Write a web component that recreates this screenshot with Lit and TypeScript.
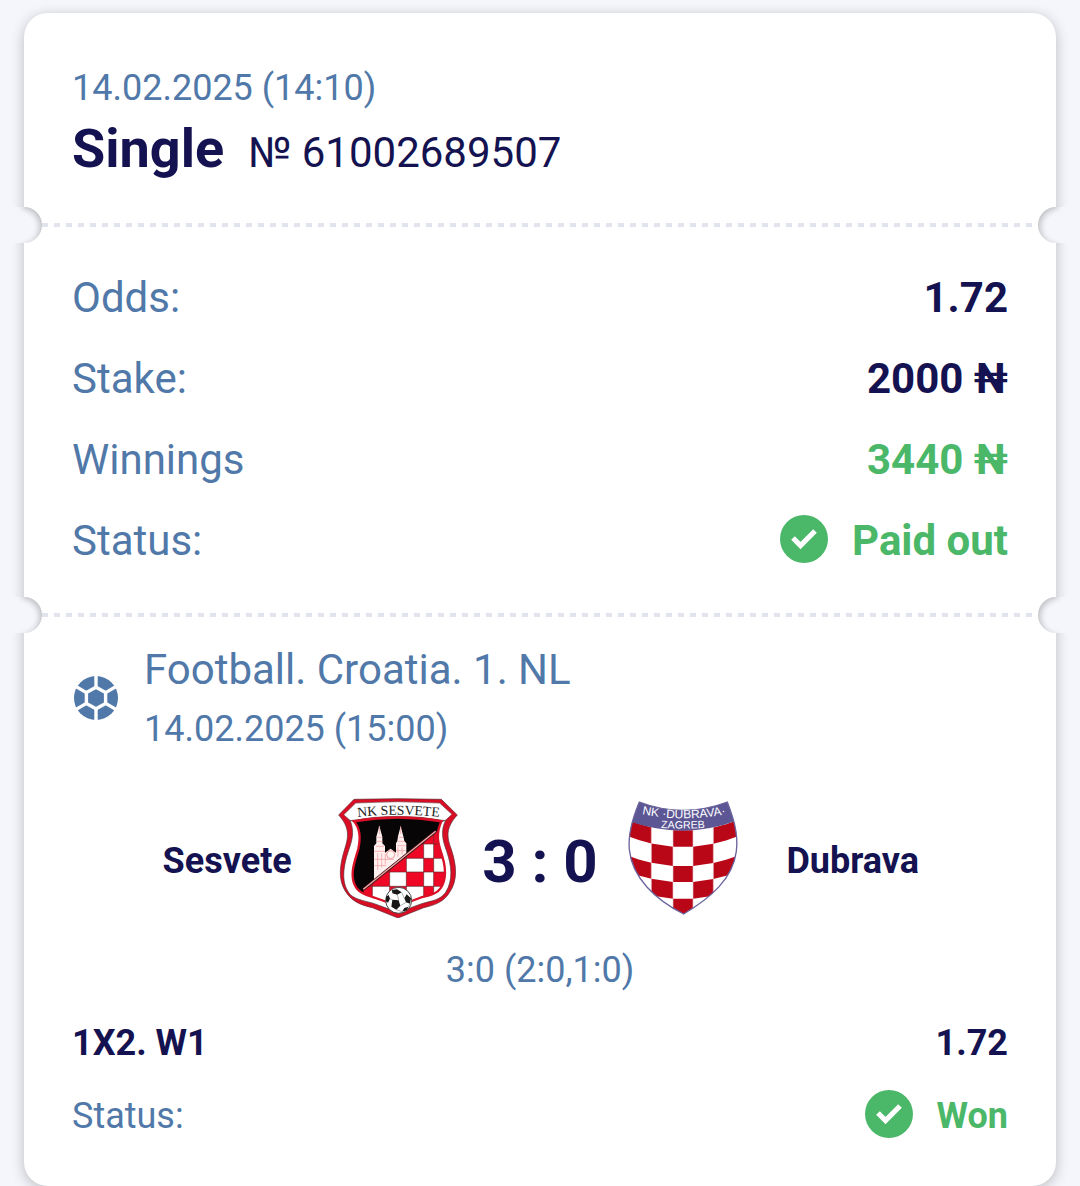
import { LitElement, html, css, svg } from "lit";
import { customElement, property } from "lit/decorators.js";

@customElement("check-badge")
class CheckBadge extends LitElement {
  static styles = css`
    :host { display: block; flex: none; width: 48px; height: 48px; margin-bottom: 4px; }
    .icon { display: block; width: 100%; height: 100%; }
  `;
  render() {
    return html`<svg class="icon" viewBox="0 0 48 48" aria-hidden="true">
      <circle cx="24" cy="24" r="24" fill="#4bb769" />
      <path d="M13 23 20.5 30.5 35 16" fill="none" stroke="#fff" stroke-width="5.2" />
    </svg>`;
  }
}

@customElement("ball-icon")
class BallIcon extends LitElement {
  static styles = css`
    :host { display: block; flex: none; width: 48px; height: 48px; }
    .icon { display: block; width: 100%; height: 100%; }
  `;
  render() {
    return html`<svg class="icon" viewBox="0 0 48 48" aria-hidden="true">
      <circle cx="24" cy="24" r="22" fill="#5078a8" />
      <path d="M24 13.2 33.6 18.6V29.4L24 34.8 14.4 29.4V18.6Z" fill="#5078a8" stroke="#fff" stroke-width="3.4" />
      <path d="M24 0V13.2M24 34.8V48M14.4 18.6 3 12M33.6 18.6 45 12M14.4 29.4 3 36M33.6 29.4 45 36" stroke="#fff" stroke-width="3.4" />
    </svg>`;
  }
}

@customElement("ticket-divider")
class TicketDivider extends LitElement {
  static styles = css`
    :host { display: flex; align-items: center; position: relative; height: 36px; padding: 0 18px; }
    .dashes {
      flex: 1; height: 4px;
      background: repeating-linear-gradient(90deg, #e1e4ed 0 6px, transparent 6px 12px);
    }
    .notch { position: absolute; top: 0; width: 36px; height: 36px; border-radius: 50%; background: #f4f6fb; }
    .left { left: -18px; box-shadow: inset -3px 2px 6px -1px rgba(0, 0, 0, 0.24); }
    .right { right: -18px; box-shadow: inset 3px 2px 6px -1px rgba(0, 0, 0, 0.24); }
    .notch::before { content: ""; position: absolute; top: 0; width: 20px; height: 36px; }
    .left::before { left: 0; background: linear-gradient(90deg, #f4f6fb 60%, transparent); }
    .right::before { right: 0; background: linear-gradient(270deg, #f4f6fb 60%, transparent); }
  `;
  render() {
    return html`<span class="notch left"></span><span class="dashes"></span><span class="notch right"></span>`;
  }
}

const sesvete = () => html`<svg class="crest" viewBox="27 24 360 360" role="img" aria-label="NK Sesvete">
    <defs>
      <clipPath id="inner"><path d="M75 96Q207 72 337 96C317 139 330 166 340 199C355 247 348 286 326 304C307 318 288 318 272 324L207 348 140 324C111 315 88 309 77 284C61 249 80 208 88 176C95 145 94 116 75 96Z" /></clipPath>
      <clipPath id="field"><path d="M103 298 320 124H360V350H103Z" /></clipPath>
      <path id="arc1" d="M76 82Q207 66 341 82" />
    </defs>
    <path d="M75 28Q207 24 337 28L385 75C349 113 354 143 366 175C383 225 387 270 362 307C344 337 315 346 284 353L207 384 130 353C94 345 67 334 48 302C25 265 34 218 48 174C59 139 62 112 29 75Z" fill="#d90d24" stroke="#5a2a33" stroke-width="2" />
    <path d="M80 39Q207 31 332 39L369 73 348 92Q207 66 64 92L44 74Z" fill="#fff" stroke="#6a3a42" stroke-width="2" />
    <path d="M75 93Q72 96 63 90C78 127 68 154 59 181C39 239 38 284 64 314C82 330 112 333 136 341L207 367 278 341C310 332 334 330 350 307C372 271 369 229 352 181C341 151 334 123 350 91Q340 96 335 93C315 139 329 166 339 199C354 247 347 286 326 304C307 318 288 318 272 324L207 348 140 324C111 315 88 309 77 284C61 249 80 208 88 176C95 145 94 116 75 93Z" fill="#fff" stroke="#503338" stroke-width="2" />
    <g clip-path="url(#inner)">
      <rect x="60" y="60" width="300" height="300" fill="#080506" />
      <path d="M135 270V168L142 160V140L151 108 160 140V160L168 168V188L185 176 201 188V160L205 153 207 139 215 109 223 139 226 153 232 160V190Z" fill="#fff0ef" />
      <path d="M151 108V132M215 109V132M145 142H158M209 142H222M143 154H160M207 154H226M141 169H165M205 167H230M136 184H168M201 182H230M136 208H195M136 227H172M146 190V240M158 190V232M169 192V224M207 172V200M219 172V194" stroke="#eea5a7" stroke-width="2.5" />
      <circle cx="185" cy="194" r="12" fill="#fff6f1" stroke="#ea9a9d" stroke-width="3" />
      <g clip-path="url(#field)">
        <rect x="75" y="80" width="300" height="290" fill="#ee0826" />
        <path d="M284 162H314V205H284ZM232 205H284V246H232ZM314 205H366V246H314ZM182 246H232V289H182ZM284 246H314V289H284ZM130 289H182V330H130ZM232 289H284V330H232ZM314 289H366V330H314Z" fill="#fff" />
        <path d="M314 118V330M284 118V330M232 130V330M182 190V330M130 260V330M130 246H350M105 289H345M184 205H350M232 162H330" stroke="#65272c" stroke-width="2" />
      </g>
      <path d="M103 298 320 124" stroke="#3a171b" stroke-width="9" /><path d="M103 298 320 124" stroke="#f5aaa9" stroke-width="4" />
    </g>
    <path d="M75 94Q207 72 337 94C317 139 330 166 340 199C355 247 348 286 326 304C307 318 288 318 272 324L207 348 140 324C111 315 88 309 77 284C61 249 80 208 88 176C95 145 94 116 75 94Z" fill="none" stroke="#db1027" stroke-width="7" />
    <circle cx="209" cy="331" r="39" fill="#fff" stroke="#444" stroke-width="3" />
    <path d="M189 300 204 298 218 307 205 314 190 310ZM233 313 246 325 243 341 231 337 226 325ZM190 329 209 331 214 347 202 359 187 350ZM171 320 179 315 183 326 177 338 171 334ZM219 365 226 354 238 350 234 361Z" fill="#181818" />
    <path d="M205 314 209 331M218 307 226 325M231 337 214 347M202 359 219 365M190 329 183 326M238 350 243 341" stroke="#888" stroke-width="2" />
    <text class="sesvete-name"><textPath href="#arc1" startOffset="50%" text-anchor="middle">NK SESVETE</textPath></text>
  </svg>`;

const SHIELD = "M52 12Q183 62 316 12C332 55 350 103 343 160C332 243 267 299 185 348C102 306 30 240 22 155C17 103 34 55 52 12Z";
const COLUMNS = [10, 50, 88, 153, 213, 274, 312, 356];
const ROWS = [98, 147, 205, 253, 303, 352];
const sag = (x: number) => -30 * ((x - 183) / 160) ** 2;

const dubrava = () => {
  const checks = [];
  for (let r = 0; r < 5; r++)
    for (let c = 0; c < 5; c++) {
      if ((r + c) % 2) continue;
      const from = c === 0 ? 0 : c + 1;
      const to = c === 4 ? 7 : c + 2;
      const xs = COLUMNS.slice(from, to + 1);
      const top = xs.map((x) => `${x},${ROWS[r] + sag(x)}`);
      const bottom = xs.map((x) => `${x},${ROWS[r + 1] + sag(x)}`).reverse();
      checks.push(svg`<polygon points=${[...top, ...bottom].join(" ")} fill="#ba0718" />`);
    }
  return html`<svg class="crest" viewBox="0 0 360 360" role="img" aria-label="NK Dubrava Zagreb">
    <defs>
      <clipPath id="shield"><path d=${SHIELD} /></clipPath>
      <path id="arc2" d="M46 46Q183 76 326 46" />
      <path id="arc3" d="M95 89Q183 94 271 89" />
    </defs>
    <g clip-path="url(#shield)">
      <rect width="360" height="360" fill="#fff" />
      ${checks}
      <path d="M88 80V330M153 90V350M213 90V350M274 80V330" stroke="#e3c3c7" stroke-width="2" />
      <path d="M0 0H360V62Q183 134 0 62Z" fill="#5c5694" />
    </g>
    <path d=${SHIELD} fill="none" stroke="#6b649d" stroke-width="4" />
    <text class="dubrava-name"><textPath href="#arc2" startOffset="50%" text-anchor="middle">NK ·DUBRAVA·</textPath></text>
    <text class="dubrava-city"><textPath href="#arc3" startOffset="50%" text-anchor="middle">ZAGREB</textPath></text>
  </svg>`;
};

@customElement("app-root")
class AppRoot extends LitElement {
  static styles = css`
    :host {
      display: block; box-sizing: border-box; min-height: 100vh; overflow: hidden;
      padding: 13px 24px 0; background: #f4f6fb; color: #141250;
      font-family: Roboto, "Liberation Sans", sans-serif; font-size: 42px; line-height: 48px;
    }
    .ticket { background: #fff; border-radius: 24px; box-shadow: 0 3px 14px rgba(0, 0, 0, 0.24); padding-bottom: 34px; }
    h1, h2, p, dl, dd { margin: 0; font-weight: 400; font-size: inherit; }
    .head { padding: 54px 48px 18px; }
    .small { font-size: 36px; line-height: 42px; }
    .muted, dt { color: #5078a8; }
    .title { display: flex; align-items: baseline; gap: 24px; line-height: 72px; padding-top: 4px; }
    .kind { font-size: 54px; font-weight: 700; }
    .rows { padding: 14px 48px 16px; }
    .row { display: flex; align-items: center; justify-content: space-between; height: 81px; }
    .value { display: flex; align-items: center; gap: 24px; font-weight: 700; }
    .good { color: #4bb769; }
    .league { display: flex; align-items: center; gap: 24px; padding: 13px 48px 0; }
    .league-text { display: grid; gap: 14px; }
    .match {
      display: grid; grid-template-columns: minmax(0, 174px) auto auto auto minmax(0, 174px);
      gap: 24px; justify-content: center; align-items: center; padding: 48px 48px 0;
    }
    .team { text-align: center; font-size: 36px; font-weight: 700; padding-top: 6px; }
    .score { font-size: 60px; line-height: 72px; font-weight: 700; padding-top: 8px; }
    .crest { display: block; width: 120px; height: 120px; }
    .periods { text-align: center; padding: 31px 48px 15px; }
    .bet { padding: 0 48px; font-size: 36px; }
    .bet .row { height: 73px; }
    .bet .pick { color: #141250; font-weight: 700; }
    .sesvete-name { font: 41px "Liberation Serif", serif; fill: #222; }
    .dubrava-name { font: 36px "Liberation Sans", sans-serif; fill: #fff; }
    .dubrava-city { font: 32px "Liberation Sans", sans-serif; fill: #fff; }
  `;
  @property() number = "61002689507";
  render() {
    return html`<main class="ticket">
      <header class="head">
        <p class="small muted">14.02.2025 (14:10)</p>
        <h1 class="title"><span class="kind">Single</span><span>№ ${this.number}</span></h1>
      </header>
      <ticket-divider></ticket-divider>
      <dl class="rows">
        <div class="row"><dt>Odds:</dt><dd class="value">1.72</dd></div>
        <div class="row"><dt>Stake:</dt><dd class="value">2000 ₦</dd></div>
        <div class="row"><dt>Winnings</dt><dd class="value good">3440 ₦</dd></div>
        <div class="row"><dt>Status:</dt><dd class="value good"><check-badge></check-badge>Paid out</dd></div>
      </dl>
      <ticket-divider></ticket-divider>
      <section>
        <header class="league muted">
          <ball-icon></ball-icon>
          <div class="league-text"><h2>Football. Croatia. 1. NL</h2><p class="small">14.02.2025 (15:00)</p></div>
        </header>
        <div class="match">
          <span class="team">Sesvete</span>${sesvete()}<span class="score">3 : 0</span>${dubrava()}<span class="team">Dubrava</span>
        </div>
        <p class="periods small muted">3:0 (2:0,1:0)</p>
        <dl class="bet">
          <div class="row"><dt class="pick">1X2. W1</dt><dd class="value">1.72</dd></div>
          <div class="row"><dt>Status:</dt><dd class="value good"><check-badge></check-badge>Won</dd></div>
        </dl>
      </section>
    </main>`;
  }
}
